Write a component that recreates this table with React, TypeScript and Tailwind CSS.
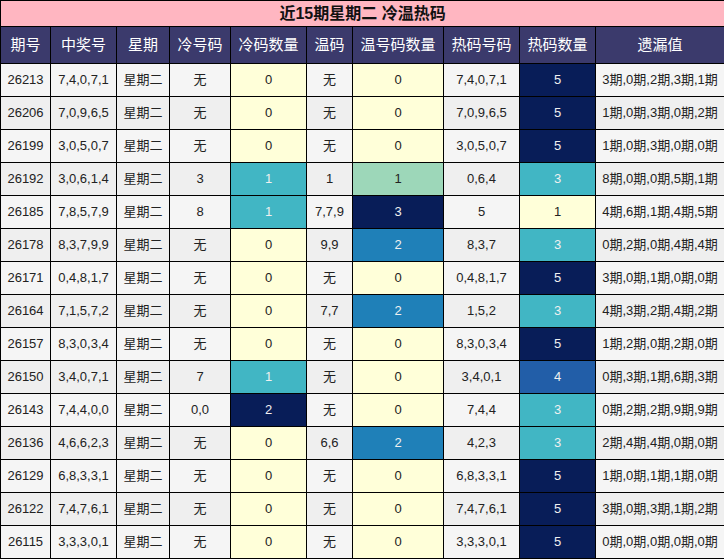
import React from "react";

type Row = [string, string, string, string, number, string, number, string, number, string];

const rows: Row[] = [
  ["26213", "7,4,0,7,1", "星期二", "无", 0, "无", 0, "7,4,0,7,1", 5, "3期,0期,2期,3期,1期"],
  ["26206", "7,0,9,6,5", "星期二", "无", 0, "无", 0, "7,0,9,6,5", 5, "1期,0期,3期,0期,2期"],
  ["26199", "3,0,5,0,7", "星期二", "无", 0, "无", 0, "3,0,5,0,7", 5, "1期,0期,3期,0期,0期"],
  ["26192", "3,0,6,1,4", "星期二", "3", 1, "1", 1, "0,6,4", 3, "8期,0期,0期,5期,1期"],
  ["26185", "7,8,5,7,9", "星期二", "8", 1, "7,7,9", 3, "5", 1, "4期,6期,1期,4期,5期"],
  ["26178", "8,3,7,9,9", "星期二", "无", 0, "9,9", 2, "8,3,7", 3, "0期,2期,0期,4期,4期"],
  ["26171", "0,4,8,1,7", "星期二", "无", 0, "无", 0, "0,4,8,1,7", 5, "3期,0期,1期,0期,0期"],
  ["26164", "7,1,5,7,2", "星期二", "无", 0, "7,7", 2, "1,5,2", 3, "4期,3期,2期,4期,2期"],
  ["26157", "8,3,0,3,4", "星期二", "无", 0, "无", 0, "8,3,0,3,4", 5, "1期,2期,0期,2期,0期"],
  ["26150", "3,4,0,7,1", "星期二", "7", 1, "无", 0, "3,4,0,1", 4, "0期,3期,1期,6期,3期"],
  ["26143", "7,4,4,0,0", "星期二", "0,0", 2, "无", 0, "7,4,4", 3, "0期,2期,2期,9期,9期"],
  ["26136", "4,6,6,2,3", "星期二", "无", 0, "6,6", 2, "4,2,3", 3, "2期,4期,4期,0期,0期"],
  ["26129", "6,8,3,3,1", "星期二", "无", 0, "无", 0, "6,8,3,3,1", 5, "1期,0期,1期,1期,0期"],
  ["26122", "7,4,7,6,1", "星期二", "无", 0, "无", 0, "7,4,7,6,1", 5, "3期,0期,3期,1期,2期"],
  ["26115", "3,3,3,0,1", "星期二", "无", 0, "无", 0, "3,3,3,0,1", 5, "0期,0期,0期,0期,0期"],
];

const coldCls: Record<number, string> = {
  0: "bg-[#ffffd9] text-[#222]",
  1: "bg-[#41b6c4] text-[#f0f0f0]",
  2: "bg-[#081d58] text-[#f0f0f0]",
};
const warmCls: Record<number, string> = {
  0: "bg-[#ffffd9] text-[#222]",
  1: "bg-[#9dd7b9] text-[#222]",
  2: "bg-[#1f80b8] text-[#f0f0f0]",
  3: "bg-[#081d58] text-[#f0f0f0]",
};
const hotCls: Record<number, string> = {
  1: "bg-[#ffffd9] text-[#222]",
  3: "bg-[#41b6c4] text-[#f0f0f0]",
  4: "bg-[#225ea8] text-[#f0f0f0]",
  5: "bg-[#081d58] text-[#f0f0f0]",
};

const headers = ["期号", "中奖号", "星期", "冷号码", "冷码数量", "温码", "温号码数量", "热码号码", "热码数量", "遗漏值"];
const widths = [50, 66, 53, 61, 76, 46, 91, 76, 76, 129];

export default function App() {
  return (
    <div
      className="w-[724px] h-[559px] bg-white"
      style={{ fontFamily: '"Liberation Sans", "Noto Sans CJK SC", sans-serif' }}
    >
      <table className="table-fixed border-collapse w-[724px] text-[13px] text-[#222]">
        <colgroup>
          {widths.map((w, i) => (
            <col key={i} style={{ width: w }} />
          ))}
        </colgroup>
        <thead>
          <tr className="h-[26px]">
            <th colSpan={10} className="border border-black bg-[#ffb6c1] text-[16px] font-bold text-[#111] p-0 leading-none">
              近15期星期二 冷温热码
            </th>
          </tr>
          <tr className="h-[37px]">
            {headers.map((h) => (
              <th key={h} className="border border-black bg-[#3b3a6c] text-white text-[15px] font-normal p-0">
                {h}
              </th>
            ))}
          </tr>
        </thead>
        <tbody>
          {rows.map((r, i) => {
            const base = i % 2 === 0 ? "bg-[#f5f5f5]" : "bg-[#efefef]";
            const td = `border border-black p-0 text-center ${base}`;
            const tdc = "border border-black p-0 text-center";
            return (
              <tr key={r[0]} className="h-[33px]">
                <td className={td}>{r[0]}</td>
                <td className={td}>{r[1]}</td>
                <td className={td}>{r[2]}</td>
                <td className={td}>{r[3]}</td>
                <td className={`${tdc} ${coldCls[r[4]]}`}>{r[4]}</td>
                <td className={td}>{r[5]}</td>
                <td className={`${tdc} ${warmCls[r[6]]}`}>{r[6]}</td>
                <td className={td}>{r[7]}</td>
                <td className={`${tdc} ${hotCls[r[8]]}`}>{r[8]}</td>
                <td className={`${td} whitespace-nowrap`}>{r[9]}</td>
              </tr>
            );
          })}
        </tbody>
      </table>
    </div>
  );
}
